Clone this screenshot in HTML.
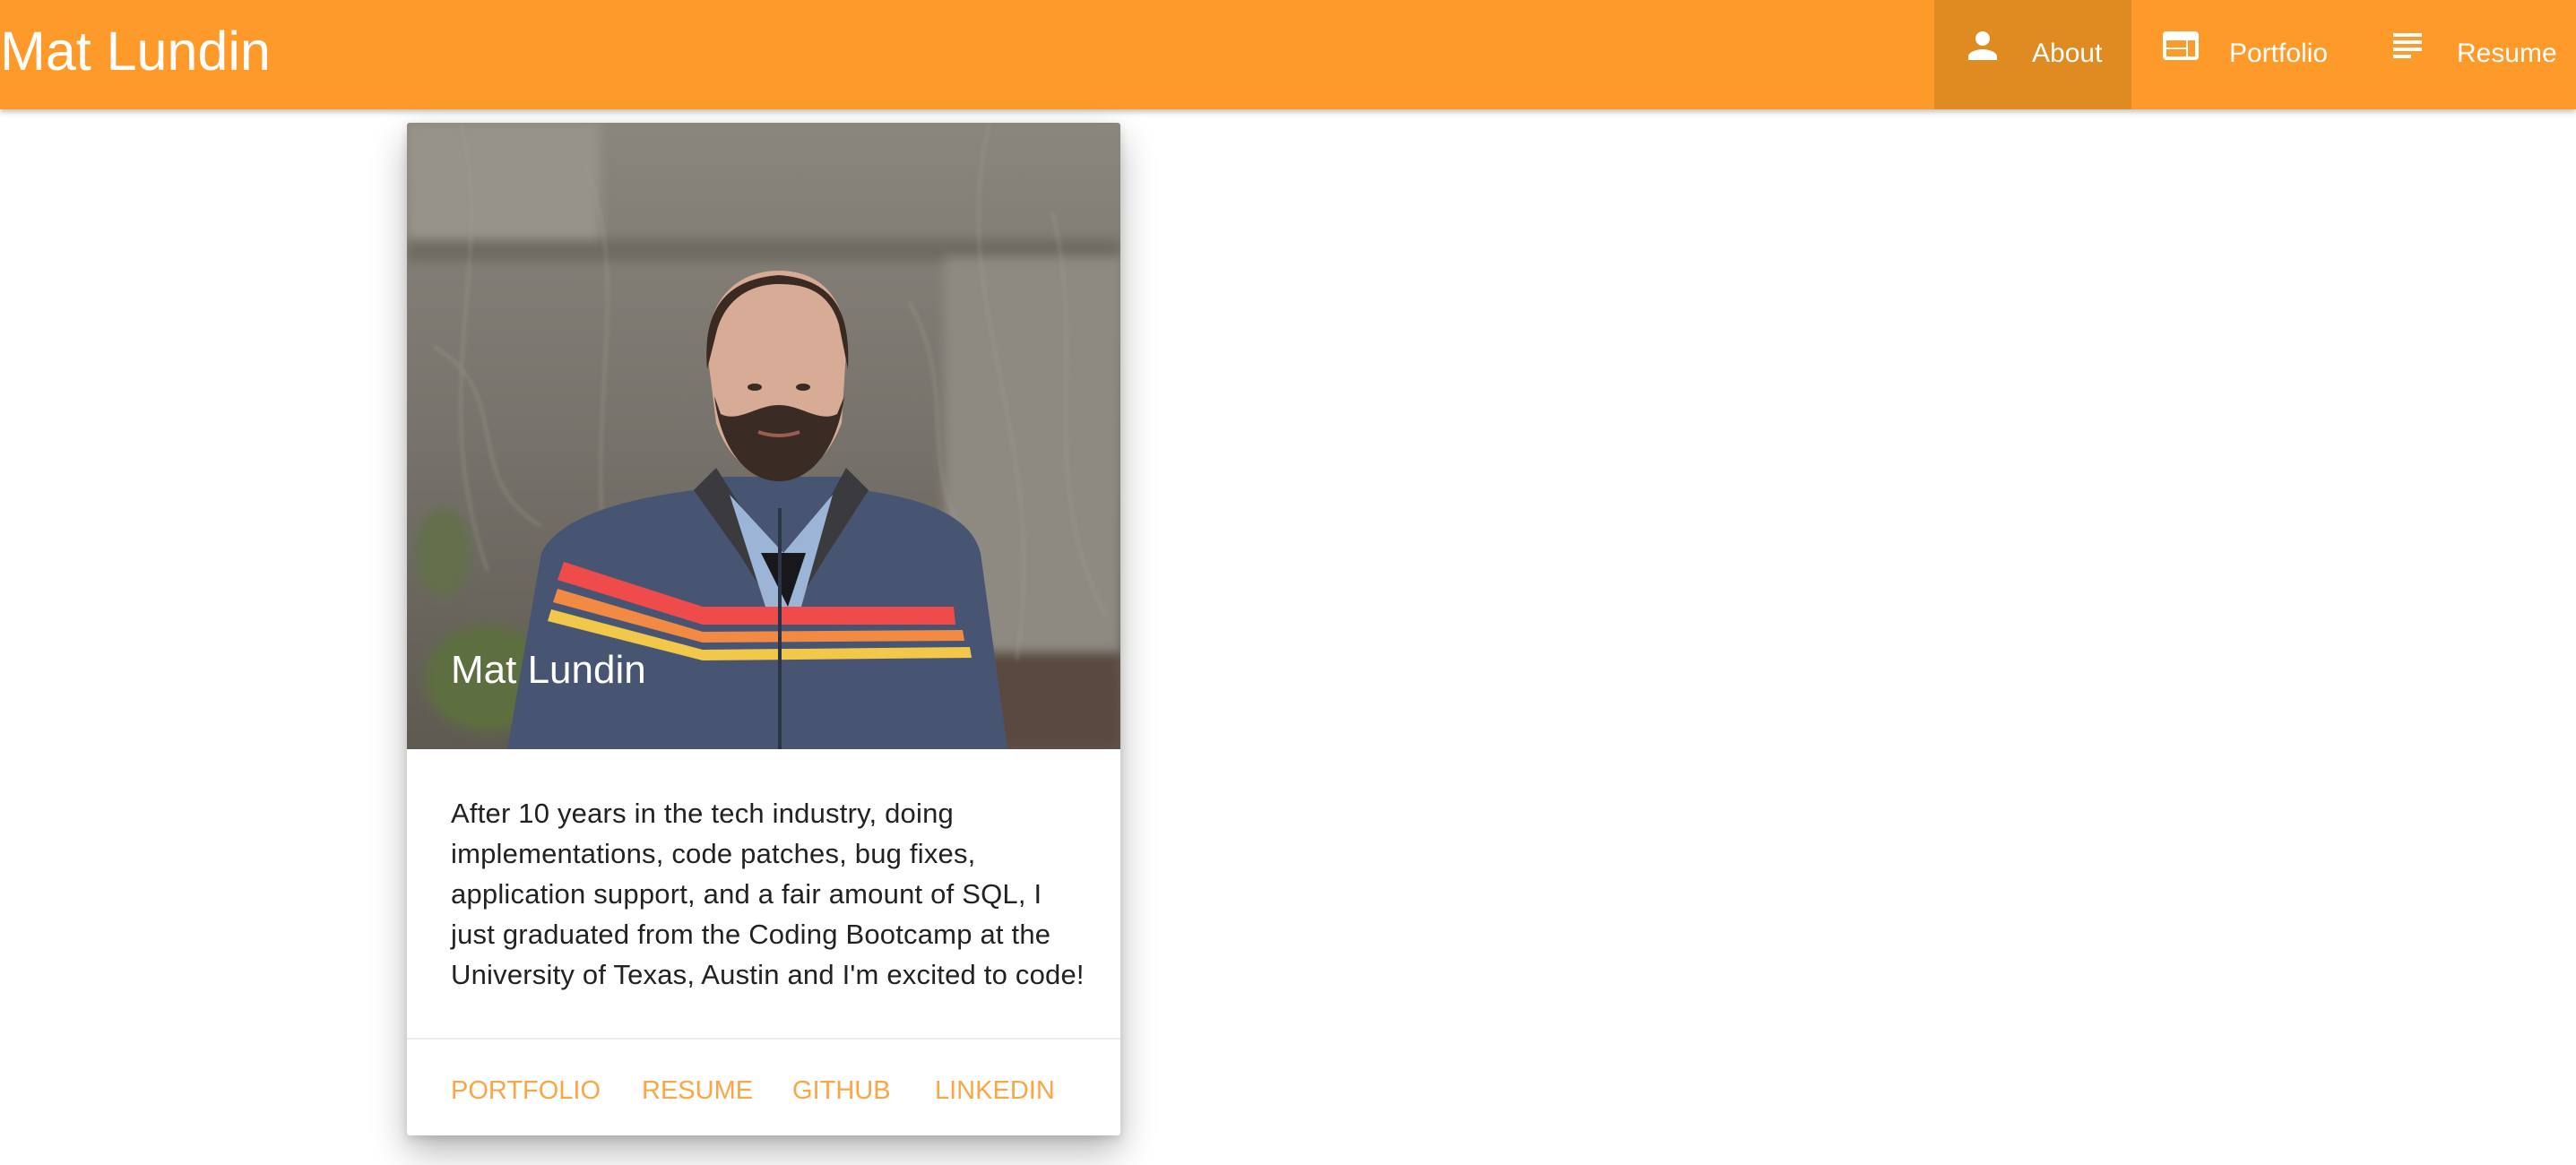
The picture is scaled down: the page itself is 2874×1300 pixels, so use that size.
<!DOCTYPE html>
<html><head><meta charset="utf-8"><style>
*{margin:0;padding:0;box-sizing:border-box}
html,body{width:2874px;height:1300px;overflow:hidden;background:#fff;font-family:"Liberation Sans",sans-serif}
.nav{position:absolute;left:0;top:0;width:2874px;height:122px;background:#fd9a29;box-shadow:0 3px 6px rgba(0,0,0,.25)}
.title{position:absolute;left:0;top:22px;font-size:61px;color:#fff;line-height:70px}
.hl{position:absolute;left:2158px;top:0;width:220px;height:122px;background:#e08a22}
.nt{position:absolute;top:43px;font-size:30px;color:#fff;line-height:34px}
.ic{position:absolute;top:27px;width:48px;height:48px}
.card{position:absolute;left:454px;top:137px;width:796px;height:1130px;background:#fff;border-radius:3px;box-shadow:0 18px 40px rgba(0,0,0,.28),0 4px 10px rgba(0,0,0,.12);overflow:hidden}
.photo{position:absolute;left:0;top:0;width:796px;height:699px}
.cap{position:absolute;left:49px;top:586px;font-size:44px;color:#fff;line-height:50px}
.txt{position:absolute;left:49px;top:748px;width:770px;font-size:31px;letter-spacing:0.2px;line-height:45px;color:#222}
.div{position:absolute;left:0;top:1021px;width:796px;height:2px;background:#ececec}
.btn{position:absolute;top:1063px;font-size:29px;color:#fca544;line-height:34px}
</style></head><body>
<div class="nav">
<div class="title">Mat Lundin</div>
<div class="hl"></div>
<svg class="ic" style="left:2188px" viewBox="0 0 24 24"><path fill="#fff" d="M12 12c2.21 0 4-1.79 4-4s-1.79-4-4-4-4 1.79-4 4 1.79 4 4 4zm0 2c-2.67 0-8 1.34-8 4v2h16v-2c0-2.66-5.33-4-8-4z"/></svg>
<div class="nt" style="left:2267px">About</div>
<svg class="ic" style="left:2409px" viewBox="0 0 24 24"><path fill="#fff" d="M20 4H4c-1.1 0-1.99.9-1.99 2L2 18c0 1.1.9 2 2 2h16c1.1 0 2-.9 2-2V6c0-1.1-.9-2-2-2zm-5 14H4v-4h11v4zm0-5H4V9h11v4zm5 5h-4V9h4v9z"/></svg>
<div class="nt" style="left:2487px">Portfolio</div>
<svg class="ic" style="left:2662px" viewBox="0 0 24 24"><path fill="#fff" d="M14 17H4v2h10v-2zm6-8H4v2h16V9zM4 15h16v-2H4v2zM4 5v2h16V5H4z"/></svg>
<div class="nt" style="left:2741px">Resume</div>
</div>
<div class="card">
<svg class="photo" viewBox="0 0 796 699" preserveAspectRatio="none">
<defs>
<filter id="b"><feGaussianBlur stdDeviation="6"/></filter>
<filter id="b2"><feGaussianBlur stdDeviation="2"/></filter>
<linearGradient id="bg" x1="0" y1="0" x2="0" y2="1"><stop offset="0" stop-color="#8a867e"/><stop offset=".5" stop-color="#77736c"/><stop offset="1" stop-color="#5e5a52"/></linearGradient>
</defs>
<rect width="796" height="699" fill="url(#bg)"/>
<g filter="url(#b)">
<rect x="0" y="0" width="215" height="130" fill="#97938a"/>
<rect x="0" y="130" width="796" height="25" fill="#6e6a62"/>
<rect x="600" y="150" width="196" height="450" fill="#8e8a82"/>
<rect x="640" y="590" width="156" height="110" fill="#5a4a40"/>
<ellipse cx="90" cy="620" rx="70" ry="60" fill="#5d6e40"/>
<ellipse cx="40" cy="480" rx="30" ry="50" fill="#64704c"/>
</g>
<g stroke="#a49c90" stroke-width="2" fill="none" opacity=".6" filter="url(#b2)">
<path d="M60 0C100 150 20 300 90 500M200 50C260 200 180 350 240 600M650 0C600 200 720 350 680 600M720 100C760 250 700 400 780 550M30 250C120 300 60 400 150 450M560 200C620 300 560 400 640 480"/>
</g>
<path d="M112 699L150 480C170 440 240 420 320 410L340 395L490 395L510 410C580 420 630 440 640 480L670 699Z" fill="#485572"/>
<path d="M320 410L345 385L380 440L420 520L460 440L490 385L515 410L470 480L420 560L370 480Z" fill="#3b3b3f"/>
<path d="M360 415L420 480L475 415L440 540L420 560L400 540Z" fill="#9cb5d6"/>
<path d="M395 480L445 480L425 540Z" fill="#18181c"/>
<path d="M168 510L175 490L330 540L610 540L612 560L330 560Z" fill="#ef4b4b"/>
<path d="M163 535L168 520L330 568L620 566L622 578L330 580Z" fill="#f28a44"/>
<path d="M157 556L161 543L330 588L628 585L630 597L330 600Z" fill="#f1c84a"/>
<rect x="414" y="430" width="4" height="269" fill="#2c3448"/>
<g transform="translate(0,25)">
<path d="M335 230C335 170 370 140 415 140C460 140 492 170 490 230L485 310C470 350 445 370 415 372C385 370 358 350 345 310Z" fill="#d8ab96"/>
<path d="M335 250C330 190 350 150 415 145C480 150 495 190 492 250L482 200C470 160 440 155 415 155C385 155 355 170 345 210Z" fill="#3a2a22"/>
<path d="M343 280C350 340 380 375 415 375C450 375 480 340 488 280L480 300C460 310 440 290 415 290C390 290 370 310 350 300Z" fill="#3a2c25"/>
<path d="M392 320Q415 328 438 320" stroke="#9a5e55" stroke-width="4" fill="none"/>
<ellipse cx="388" cy="270" rx="8" ry="4" fill="#3a2a22"/><ellipse cx="442" cy="270" rx="8" ry="4" fill="#3a2a22"/>
</g>
</svg>
<div class="cap">Mat Lundin</div>
<div class="txt">After 10 years in the tech industry, doing<br>implementations, code patches, bug fixes,<br>application support, and a fair amount of SQL, I<br>just graduated from the Coding Bootcamp at the<br>University of Texas, Austin and I'm excited to code!</div>
<div class="div"></div>
<div class="btn" style="left:49px">PORTFOLIO</div>
<div class="btn" style="left:262px">RESUME</div>
<div class="btn" style="left:430px">GITHUB</div>
<div class="btn" style="left:589px">LINKEDIN</div>
</div>
</body></html>
